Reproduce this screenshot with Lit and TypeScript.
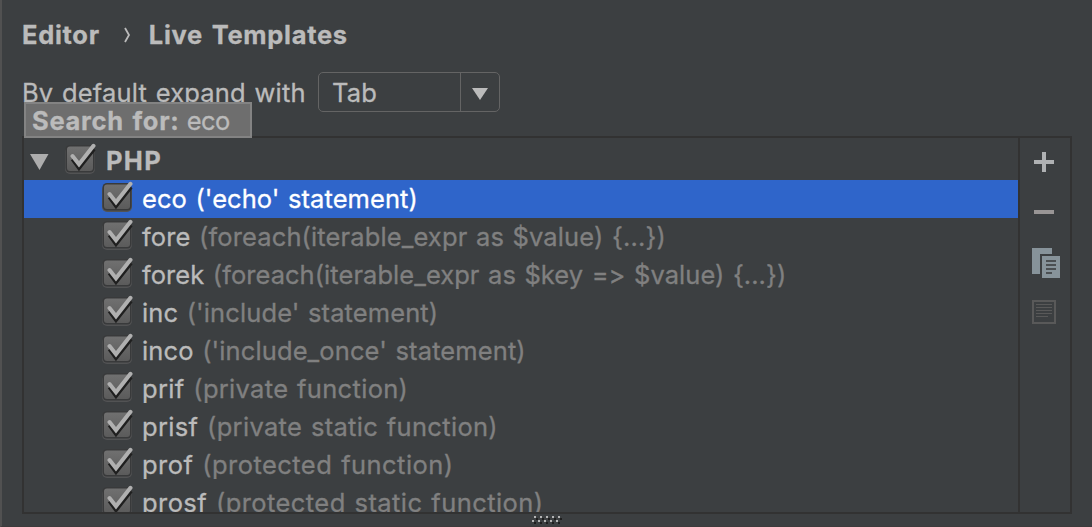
import { LitElement, html, svg, css } from "lit";
import { customElement } from "lit/decorators.js";
import { classMap } from "lit/directives/class-map.js";
import { styleMap } from "lit/directives/style-map.js";

interface Template {
  key: string;
  description: string;
  tracking: number;
  selected?: boolean;
}

const TEMPLATES: Template[] = [
  { key: "eco", description: "('echo' statement)", tracking: 0.06, selected: true },
  { key: "fore", description: "(foreach(iterable_expr as $value) {...})", tracking: 0.12 },
  { key: "forek", description: "(foreach(iterable_expr as $key => $value) {...})", tracking: 0.05 },
  { key: "inc", description: "('include' statement)", tracking: 0.1 },
  { key: "inco", description: "('include_once' statement)", tracking: 0.11 },
  { key: "prif", description: "(private function)", tracking: 0.31 },
  { key: "prisf", description: "(private static function)", tracking: 0.31 },
  { key: "prof", description: "(protected function)", tracking: 0.45 },
  { key: "prosf", description: "(protected static function)", tracking: 0.42 },
];

@customElement("check-box")
class CheckBox extends LitElement {
  static styles = css`
    :host { display: block; width: 32px; height: 38px; flex: none; }
    svg { display: block; }
  `;
  render() {
    return html`<svg width="32" height="38" viewBox="0 0 32 38">
      <defs>
        <linearGradient id="face" x1="0" y1="0" x2="0" y2="1">
          <stop offset="0" stop-color="#707070" />
          <stop offset="1" stop-color="#5b5b5b" />
        </linearGradient>
      </defs>
      <rect x="1" y="5" width="30" height="27" rx="5" fill="#525354" />
      <rect x="1.5" y="3" width="29" height="27.5" rx="4.5" fill="#393a3b" />
      <rect x="3" y="4.5" width="26" height="24.5" rx="3" fill="url(#face)" />
      <path d="M8.5 17 L15 26 L30 7" fill="none" stroke="#1f1f1f" stroke-width="4" stroke-linejoin="miter" />
      <path d="M8.5 14 L15 22.3 L29.5 3.8" fill="none" stroke="#b0b0b0" stroke-width="4" stroke-linecap="round" stroke-linejoin="miter" />
    </svg>`;
  }
}

@customElement("app-root")
class AppRoot extends LitElement {
  static styles = css`
    :host {
      display: flex;
      flex-direction: column;
      box-sizing: border-box;
      width: 1092px;
      height: 527px;
      overflow: hidden;
      position: relative;
      padding-left: 20px;
      border-left: 2px solid #515151;
      border-bottom: 1px solid #3d3a3b;
      background: #3c3f41;
      color: #bbbbbb;
      font: 25.5px/38px Inter, "Liberation Sans", sans-serif;
      font-feature-settings: "calt" 0;
      letter-spacing: 0.18px;
      word-spacing: 1.3px;
      -webkit-text-stroke: 0.3px currentColor;
    }
    .crumbs, .group, b { font-weight: 700; letter-spacing: 0.7px; word-spacing: 2px; }
    .crumbs { display: flex; align-items: center; height: 38px; margin-top: 16px; }
    .crumbs svg { margin: 0 18px 0 23px; }
    .expand { display: flex; align-items: center; height: 40px; margin-top: 18px; }
    .label { width: 296px; padding-top: 2px; white-space: nowrap; }
    .combo {
      display: flex;
      box-sizing: border-box;
      width: 182px;
      height: 40px;
      border: 1px solid #646464;
      border-radius: 5px;
    }
    .value { width: 128px; padding: 1px 0 0 13px; height: 37px; }
    .arrow { display: flex; flex: 1; align-items: center; justify-content: center; border-left: 1px solid #646464; padding-top: 3px; }
    .panel {
      display: flex;
      box-sizing: border-box;
      width: 1050px;
      height: 378px;
      margin-top: 24px;
      border: 2px solid #323232;
    }
    .tree { width: 994px; padding-top: 4px; box-sizing: border-box; overflow: hidden; }
    .row { display: flex; height: 38px; padding-left: 77px; }
    .row.group { padding-left: 6px; letter-spacing: 1.3px; }
    .row.selected, .row.selected .description { background: #2f65ca; color: #ffffff; }
    .toggle { width: 34px; margin-top: 12px; }
    .text { margin-left: 9px; white-space: nowrap; }
    .group .text { margin-left: 10px; }
    .description { color: #808080; }
    .tools {
      display: flex;
      flex: 1;
      flex-direction: column;
      align-items: center;
      border-left: 2px solid #323232;
    }
    .popup {
      position: absolute;
      left: 22px;
      top: 102px;
      box-sizing: border-box;
      width: 228px;
      height: 36px;
      padding-left: 6px;
      border: 2px solid #838383;
      background: #6e6e6e;
      line-height: 34px;
      white-space: nowrap;
      word-spacing: 0;
    }
    .popup span { letter-spacing: -0.6px; }
    .grip { margin: 2px 0 0 509px; display: block; }
  `;

  render() {
    return html`
      <div class="crumbs">
        <span>Editor</span>
        <svg width="8" height="16" viewBox="0 0 8 16"><path d="M2 1 L6 8 L2 15" fill="none" stroke="#bbbbbb" stroke-width="1.8" /></svg>
        <span>Live Templates</span>
      </div>
      <div class="expand">
        <span class="label">By default expand with</span>
        <div class="combo">
          <span class="value">Tab</span>
          <span class="arrow"><svg width="16" height="12" viewBox="0 0 16 12"><path d="M0 0 H16 L8 12 Z" fill="#bbbbbb" /></svg></span>
        </div>
      </div>
      <div class="panel">
        <div class="tree">
          <div class="row group">
            <svg class="toggle" width="34" height="16" viewBox="0 0 34 16"><path d="M0 0 H18.5 L9.5 16 Z" fill="#adadad" /></svg>
            <check-box></check-box>
            <span class="text">PHP</span>
          </div>
          ${TEMPLATES.map(
            (t) => html`<div class=${classMap({ row: true, selected: !!t.selected })}>
              <check-box></check-box><span class="text" style=${styleMap({ letterSpacing: `${t.tracking}px` })}>${t.key} <span class="description">${t.description}</span></span>
            </div>`
          )}
        </div>
        <div class="tools">
          <svg width="50" height="200" viewBox="0 0 50 200">
            <path d="M22 14 h4 v8 h8 v4 h-8 v8 h-4 v-8 h-8 v-4 h8 z" fill="#afb1b3" />
            <rect x="14" y="72" width="20" height="4" fill="#999595" />
            <path d="M12 110 H32 V116 H20 V136 H12 Z" fill="#87939a" />
            <rect x="22" y="118" width="18" height="22" fill="#87939a" />
            <path d="M26 123 h10 M26 127 h10 M26 131 h10 M26 135 h6" stroke="#4b4f52" stroke-width="2" />
            <rect x="13" y="163" width="22" height="22" fill="none" stroke="#595959" stroke-width="2" />
            <path d="M16 166.5 h16 M16 169.5 h16 M16 172.5 h16 M16 175.5 h16 M16 178.5 h12" stroke="#595959" />
          </svg>
        </div>
      </div>
      <svg class="grip" width="32" height="8" viewBox="0 0 32 8">
        ${[0, 6, 12, 18, 24].map((x) => svg`
          <path transform="translate(${x} 0)" d="M3 0h2v2h-2z M1 4h2v2h-2z" fill="#b5b5b5" />
          <path transform="translate(${x} 0)" d="M5 2h2v2h-2z M3 6h2v2h-2z" fill="#1e1e1e" />`)}
      </svg>
      <div class="popup"><b>Search for:</b> <span>eco</span></div>
    `;
  }
}
